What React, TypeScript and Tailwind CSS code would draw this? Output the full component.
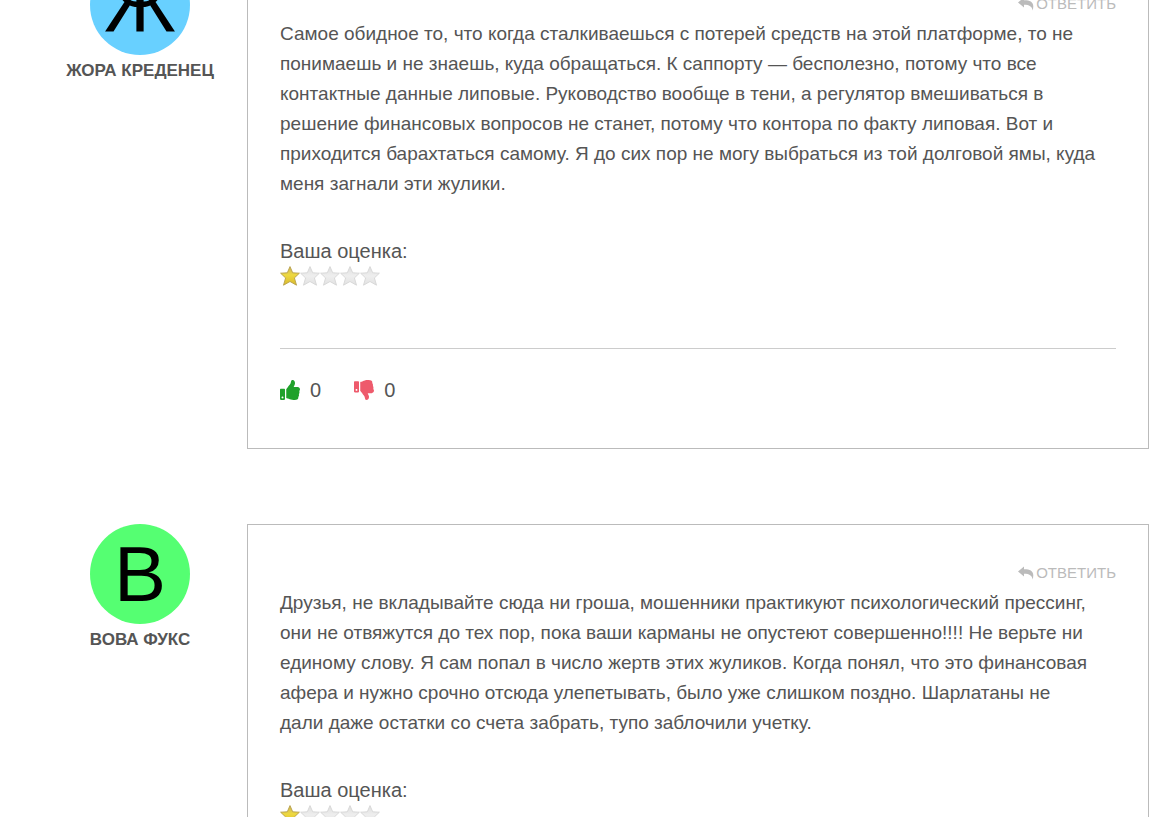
import React, { useState } from 'react';
import { FaThumbsDown, FaThumbsUp } from 'react-icons/fa';

const comments = [
    {
        id: 1,
        name: 'Жора Креденец',
        letter: 'Ж',
        color: 'bg-[#68d0ff]',
        text: 'Самое обидное то, что когда сталкиваешься с потерей средств на этой платформе, то не понимаешь и не знаешь, куда обращаться. К саппорту — бесполезно, потому что все контактные данные липовые. Руководство вообще в тени, а регулятор вмешиваться в решение финансовых вопросов не станет, потому что контора по факту липовая. Вот и приходится барахтаться самому. Я до сих пор не могу выбраться из той долговой ямы, куда меня загнали эти жулики.',
        rating: 1,
    },
    {
        id: 2,
        name: 'Вова Фукс',
        letter: 'В',
        color: 'bg-[#55ff72]',
        text: 'Друзья, не вкладывайте сюда ни гроша, мошенники практикуют психологический прессинг, они не отвяжутся до тех пор, пока ваши карманы не опустеют совершенно!!!! Не верьте ни единому слову. Я сам попал в число жертв этих жуликов. Когда понял, что это финансовая афера и нужно срочно отсюда улепетывать, было уже слишком поздно. Шарлатаны не\nдали даже остатки со счета забрать, тупо заблочили учетку.',
        rating: 1,
    },
];

function ReplyIcon() {
    return (
        <svg className="w-4 h-4" viewBox="0 0 16 16" fill="currentColor" aria-hidden="true">
            <path d="M0 6.4 L6 1.6 V4.2 C11.5 4.1 15.2 5.6 15.3 10.2 C15.3 11.8 15 13.2 14.6 14.4 C14 10.6 11.5 8.8 6 8.8 V11.4 Z" />
        </svg>
    );
}

function Star({ active }: { active: boolean }) {
    return (
        <svg className="w-5 h-5" viewBox="0 0 20 20" aria-hidden="true">
            <defs>
                <linearGradient id="starOn" x1="0" y1="0" x2="0" y2="1">
                    <stop offset="0" stopColor="#c9b25c" />
                    <stop offset="0.45" stopColor="#eed940" />
                    <stop offset="1" stopColor="#d9b92c" />
                </linearGradient>
                <linearGradient id="starOff" x1="0" y1="0" x2="0" y2="1">
                    <stop offset="0" stopColor="#dedede" />
                    <stop offset="0.5" stopColor="#eeeeee" />
                    <stop offset="1" stopColor="#e2e2e2" />
                </linearGradient>
            </defs>
            <path
                d="M10 0.6 L12.7 6.8 L19.4 7.2 L14.4 11.9 L16.5 19.2 L10 15.5 L3.5 19.2 L5.6 11.9 L0.6 7.2 L7.3 6.8 Z"
                fill={active ? 'url(#starOn)' : 'url(#starOff)'}
                stroke={active ? '#b79f4a' : '#d6d6d6'}
                strokeWidth="0.9"
                strokeLinejoin="round"
            />
        </svg>
    );
}

function Comment({ comment }: { comment: (typeof comments)[number] }) {
    const [likes, setLikes] = useState(0);
    const [dislikes, setDislikes] = useState(0);

    return (
        <article className="flex items-start">
            <div className="w-[214px] shrink-0 flex flex-col items-center">
                <div className={`w-[100px] h-[100px] rounded-full flex items-center justify-center text-[78px] leading-none text-black ${comment.color}`}>
                    {comment.letter}
                </div>
                <h3 className="text-[17px] leading-8 font-bold uppercase whitespace-nowrap">{comment.name}</h3>
            </div>

            <div className="flex-1 min-w-0 border border-[#bbb] px-8 pt-[33px] pb-[43px]">
                <div className="flex justify-end">
                    <a href="#reply" className="flex items-center gap-0.5 text-[15px] leading-[30px] uppercase text-[#bbb]">
                        <ReplyIcon />
                        Ответить
                    </a>
                </div>

                <p className="mb-[37px] text-[19px] whitespace-pre-line">{comment.text}</p>

                <p>Ваша оценка:</p>
                <div className="flex" role="img" aria-label={`${comment.rating} из 5`}>
                    {[1, 2, 3, 4, 5].map(n => (
                        <Star key={n} active={n <= comment.rating} />
                    ))}
                </div>

                <div className="mt-[62px] pt-[26px] border-t border-[#ccc] flex gap-[33px]">
                    <button type="button" aria-label="Нравится" onClick={() => setLikes(likes + 1)} className="flex items-center gap-2.5">
                        <FaThumbsUp className="text-[#20a12b]" />
                        {likes}
                    </button>
                    <button type="button" aria-label="Не нравится" onClick={() => setDislikes(dislikes + 1)} className="flex items-center gap-2.5">
                        <FaThumbsDown className="text-[#ee5a6c]" />
                        {dislikes}
                    </button>
                </div>
            </div>
        </article>
    );
}

export default function App() {
    return (
        <main className="h-screen overflow-hidden bg-white pl-[33px] pr-[23px] text-xl leading-[30px] text-[#555] font-['Liberation_Sans',Arial,sans-serif]">
            <div className="-mt-[45px] space-y-[75px]">
                {comments.map(comment => (
                    <Comment key={comment.id} comment={comment} />
                ))}
            </div>
        </main>
    );
}
